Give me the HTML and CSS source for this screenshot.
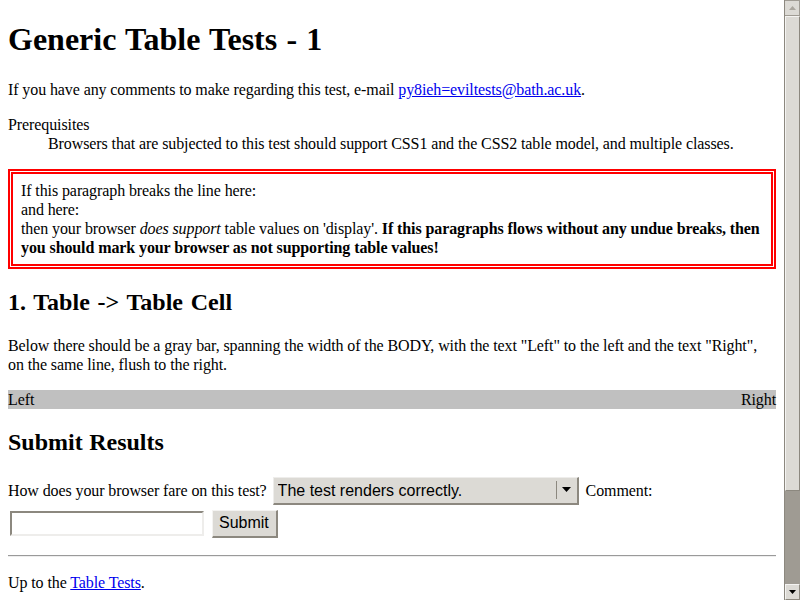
FILE: index.html
```html
<!DOCTYPE html>
<html>
<head>
<meta charset="utf-8">
<title>Generic Table Tests - 1</title>
<link rel="stylesheet" href="styles.css">
</head>
<body>
<div class="viewport">
  <div class="page">
    <div class="content">
      <h1>Generic Table Tests - 1</h1>
      <p>If you have any comments to make regarding this test, e-mail <a href="#">py8ieh=eviltests@bath.ac.uk</a>.</p>
      <dl>
        <dt>Prerequisites</dt>
        <dd>Browsers that are subjected to this test should support CSS1 and the CSS2 table model, and multiple classes.</dd>
      </dl>
      <p class="warning">If this paragraph breaks the line here:<br>and here:<br>then your browser <em>does support</em> table values on 'display'. <strong>If this paragraphs flows without any undue breaks, then you should mark your browser as not supporting table values!</strong></p>
      <h2 class="h2-wide">1. Table -&gt; Table Cell</h2>
      <p>Below there should be a gray bar, spanning the width of the BODY, with the text "Left" to the left and the text "Right", on the same line, flush to the right.</p>
      <div class="bar"><span>Left</span><span>Right</span></div>
      <h2>Submit Results</h2>
      <form class="results">
        <div class="row row-first">
          <label>How does your browser fare on this test?</label>
          <span class="select">
            <select class="select-input">
              <option>The test renders correctly.</option>
            </select>
            <span class="select-arrow"><svg width="9" height="5" viewBox="0 0 9 5"><path d="M0 0H9L4.5 5Z" fill="#000"/></svg></span>
          </span>
          <label class="comment-label">Comment:</label>
        </div>
        <div class="row row-second">
          <input class="text-input" type="text">
          <button class="submit" type="button">Submit</button>
        </div>
      </form>
      <hr class="rule">
      <p>Up to the <a href="#">Table Tests</a>.</p>
    </div>
  </div>
  <div class="scrollbar">
    <div class="sb-button sb-up"><svg width="7" height="4" viewBox="0 0 7 4"><path d="M3.5 0L7 4H0Z" fill="#aaa69e"/></svg></div>
    <div class="sb-thumb"></div>
    <div class="sb-track"></div>
    <div class="sb-button sb-down"><svg width="7" height="4" viewBox="0 0 7 4"><path d="M0 0H7L3.5 4Z" fill="#000"/></svg></div>
  </div>
</div>
</body>
</html>
```

FILE: styles.css
```css
html, body {
  margin: 0;
  padding: 0;
  background: #fff;
}

body {
  font-family: "Liberation Serif", "Times New Roman", serif;
  font-size: 16px;
  line-height: 19px;
  letter-spacing: -0.1px;
  color: #000;
}

.viewport {
  display: flex;
  width: 800px;
  height: 600px;
  overflow: hidden;
}

.page {
  width: 784px;
  height: 600px;
  overflow: hidden;
  flex: none;
}

.content {
  margin: 8px;
}

h1 {
  font-size: 32px;
  line-height: normal;
  font-weight: bold;
  letter-spacing: 0;
  word-spacing: 1.25px;
  margin: 21.44px 0;
}

h2 {
  font-size: 24px;
  line-height: normal;
  font-weight: bold;
  letter-spacing: 0;
  word-spacing: 0.5px;
  margin: 19.92px 0;
}

.h2-wide {
  word-spacing: 1.75px;
}

p {
  margin: 16px 0;
}

a {
  color: #0000ee;
  text-decoration: underline;
}

dl {
  margin: 16px 0;
}

dd {
  margin-left: 40px;
}

.warning {
  border: 5px double #ff0000;
  padding: 7px 8px;
}

.bar {
  display: flex;
  justify-content: space-between;
  background: #c0c0c0;
  margin: 16px 0;
}

.results {
  margin: 0;
}

.row {
  display: flex;
}

.row-first {
  align-items: baseline;
  padding-top: 1px;
}

.row-second {
  align-items: center;
  margin-top: 5px;
}

.select {
  display: inline-flex;
  align-items: stretch;
  width: 306px;
  height: 28px;
  box-sizing: border-box;
  margin-left: 6px;
  background: #dcdad5;
  border-top: 1px solid #eeedeb;
  border-left: 1px solid #eeedeb;
  border-right: 2px solid #8c887f;
  border-bottom: 2px solid #8c887f;
}

.select-input {
  appearance: none;
  -webkit-appearance: none;
  flex: 1;
  min-width: 0;
  border: none;
  background: transparent;
  font-family: "Liberation Sans", Arial, sans-serif;
  font-size: 16px;
  color: #000;
  padding: 0 0 0 4px;
  margin: 0;
  outline: none;
}

.select-arrow {
  width: 20px;
  display: flex;
  align-items: center;
  justify-content: center;
  margin: 3px 0 4px;
  border-left: 1px solid #8c887f;
}

.comment-label {
  margin-left: 7px;
}

.text-input {
  width: 194px;
  height: 25px;
  box-sizing: border-box;
  margin: 0 0 0 2px;
  padding: 0 3px;
  background: #fff;
  border-top: 2px solid #8c887f;
  border-left: 2px solid #8c887f;
  border-right: 2px solid #eeedeb;
  border-bottom: 2px solid #eeedeb;
  font-family: "Liberation Sans", Arial, sans-serif;
  font-size: 16px;
  outline: none;
}

.submit {
  height: 28px;
  box-sizing: border-box;
  margin: 0 0 0 8px;
  padding: 0 7px 0 6px;
  background: #dcdad5;
  border-top: 1px solid #f4f3f1;
  border-left: 1px solid #f4f3f1;
  border-right: 2px solid #8c887f;
  border-bottom: 2px solid #8c887f;
  font-family: "Liberation Sans", Arial, sans-serif;
  font-size: 16px;
  color: #000;
}

.rule {
  margin: 17px 0 8px;
  height: 0;
  border: none;
  border-top: 1px solid #9a9a9a;
  border-bottom: 1px solid #eeeeee;
}

.scrollbar {
  width: 16px;
  height: 600px;
  flex: none;
  display: flex;
  flex-direction: column;
  box-sizing: border-box;
  border-left: 1px solid #8c887f;
  background: #9f9b93;
}

.sb-button {
  height: 16px;
  flex: none;
  box-sizing: border-box;
  display: flex;
  align-items: center;
  justify-content: center;
  background: #dcdad5;
}

.sb-up {
  border: 1px solid #9f9b93;
  border-left: none;
}

.sb-down {
  border-top: 1px solid #f4f3f1;
  border-left: 1px solid #f4f3f1;
  border-right: 1px solid #8c887f;
  border-bottom: 1px solid #8c887f;
}

.sb-thumb {
  height: 475px;
  flex: none;
  box-sizing: border-box;
  background: #dcdad5;
  border-left: 1px solid #f4f3f1;
  border-top: 1px solid #f4f3f1;
  border-right: 1px solid #8c887f;
  border-bottom: 1px solid #8c887f;
}

.sb-track {
  flex: 1;
  background: #9f9b93;
}
```
